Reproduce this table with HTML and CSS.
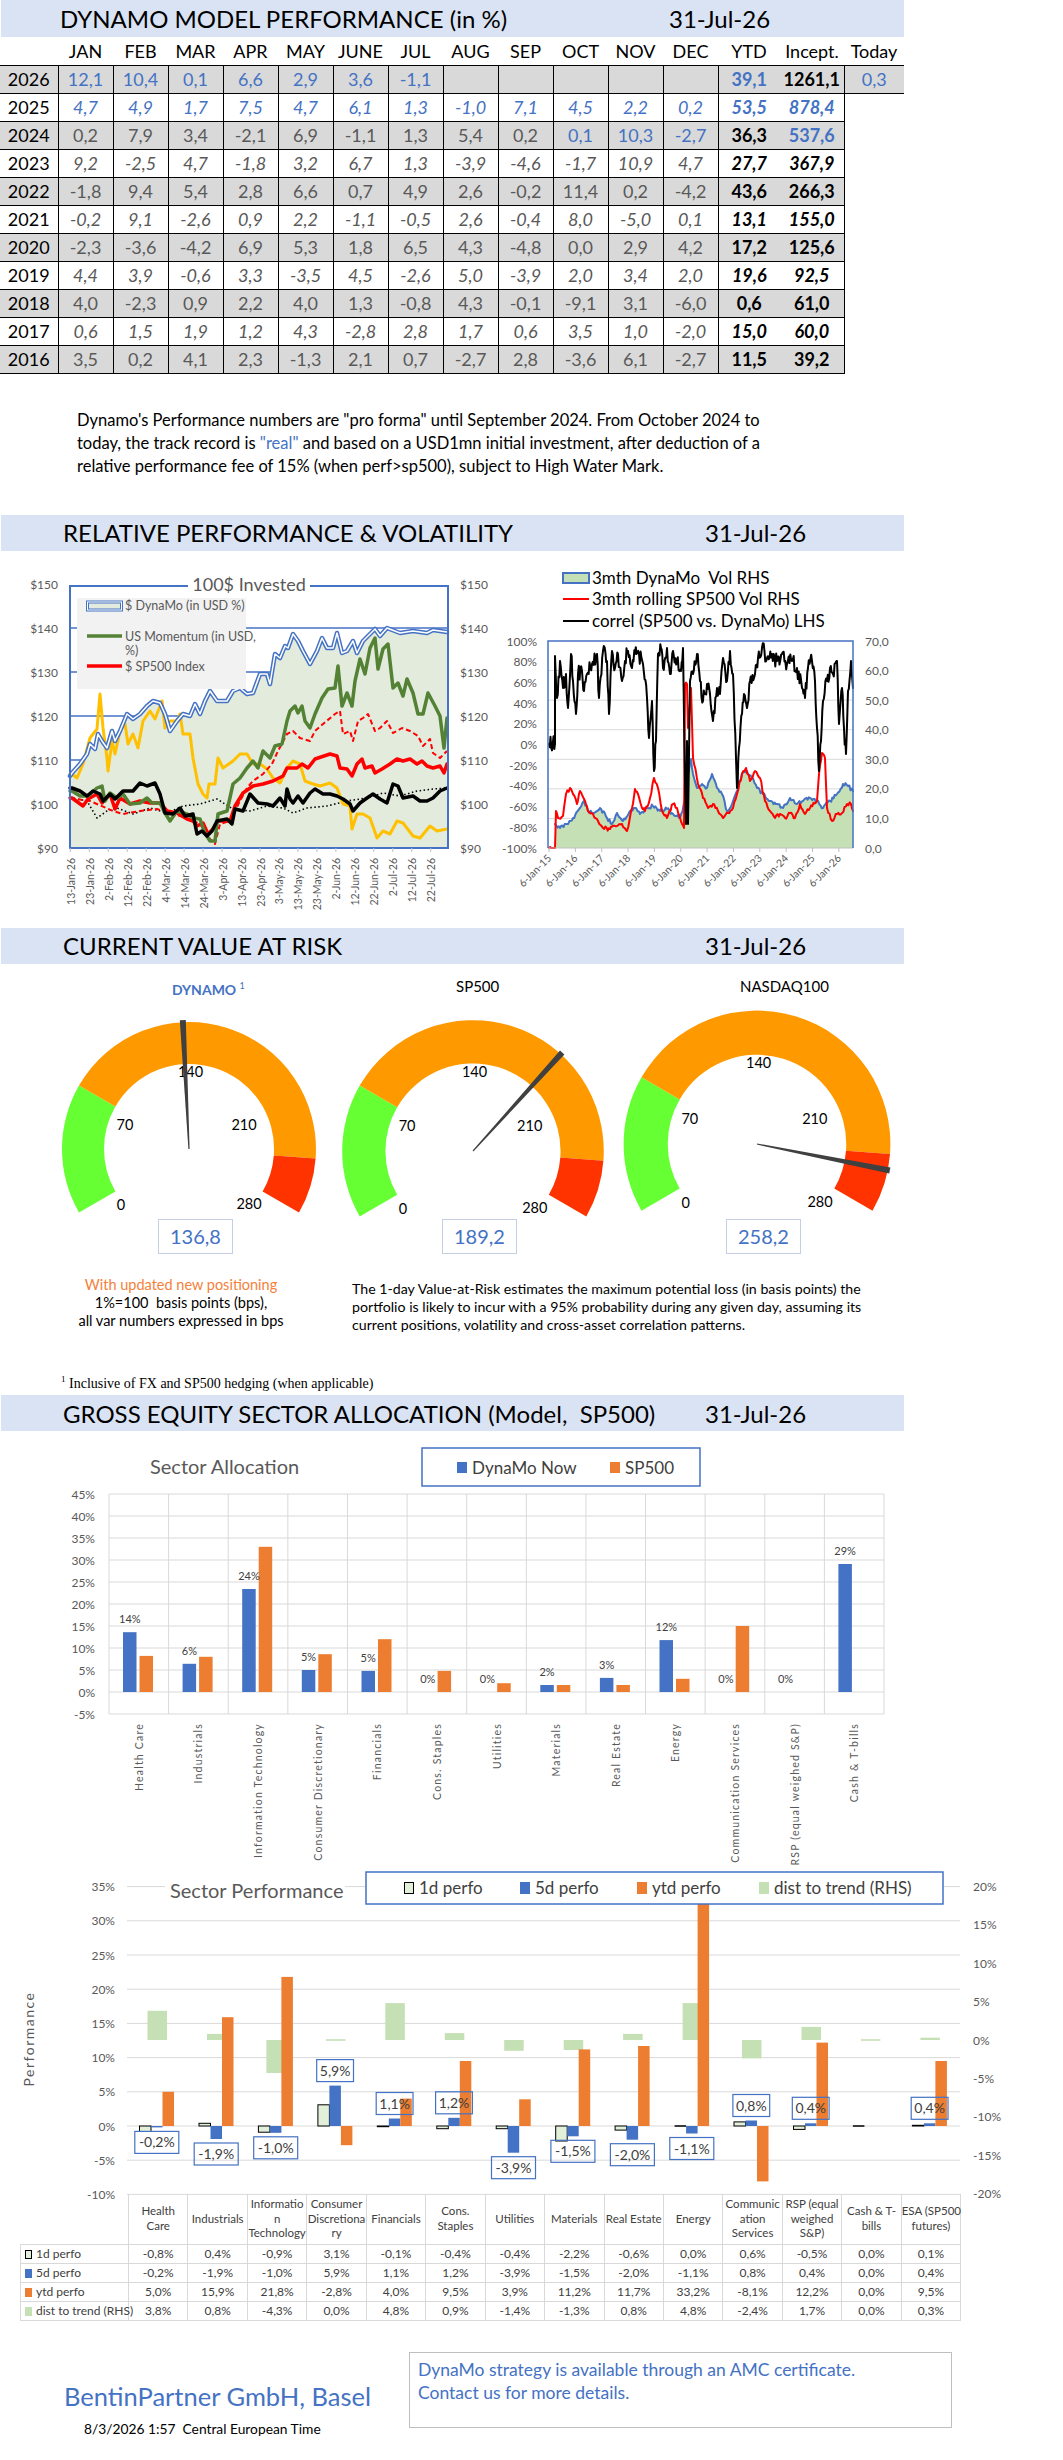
FILE: index.html
```html
<!DOCTYPE html>
<html lang="en">
<head>
<meta charset="utf-8">
<title>DynaMo Model Performance</title>
<link rel="stylesheet" href="styles.css">
</head>
<body>
<div class="page">

  <header class="bar bar-top">
    <h1 class="bar-title">DYNAMO MODEL PERFORMANCE (in %)</h1>
    <span class="bar-date">31-Jul-26</span>
  </header>

  <table class="perf">
    <colgroup>
      <col class="c-year">
      <col span="12" class="c-m">
      <col class="c-ytd"><col class="c-inc"><col class="c-today">
    </colgroup>
    <thead>
      <tr><th></th><th>JAN</th><th>FEB</th><th>MAR</th><th>APR</th><th>MAY</th><th>JUNE</th><th>JUL</th><th>AUG</th><th>SEP</th><th>OCT</th><th>NOV</th><th>DEC</th><th>YTD</th><th>Incept.</th><th>Today</th></tr>
    </thead>
    <tbody>
      <tr class="g"><td class="yr">2026</td><td class="m bl">12,1</td><td class="m bl">10,4</td><td class="m bl">0,1</td><td class="m bl">6,6</td><td class="m bl">2,9</td><td class="m bl">3,6</td><td class="m bl">-1,1</td><td class="m"></td><td class="m"></td><td class="m"></td><td class="m"></td><td class="m"></td><td class="ytd bl">39,1</td><td class="inc">1261,1</td><td class="tv bl">0,3</td></tr>
      <tr class="w it"><td class="yr">2025</td><td class="m bl">4,7</td><td class="m bl">4,9</td><td class="m bl">1,7</td><td class="m bl">7,5</td><td class="m bl">4,7</td><td class="m bl">6,1</td><td class="m bl">1,3</td><td class="m bl">-1,0</td><td class="m bl">7,1</td><td class="m bl">4,5</td><td class="m bl">2,2</td><td class="m bl">0,2</td><td class="ytd bl">53,5</td><td class="inc bl">878,4</td><td class="te"></td></tr>
      <tr class="g"><td class="yr">2024</td><td class="m">0,2</td><td class="m">7,9</td><td class="m">3,4</td><td class="m">-2,1</td><td class="m">6,9</td><td class="m">-1,1</td><td class="m">1,3</td><td class="m">5,4</td><td class="m">0,2</td><td class="m bl">0,1</td><td class="m bl">10,3</td><td class="m bl">-2,7</td><td class="ytd">36,3</td><td class="inc bl">537,6</td><td class="te"></td></tr>
      <tr class="w it"><td class="yr">2023</td><td class="m">9,2</td><td class="m">-2,5</td><td class="m">4,7</td><td class="m">-1,8</td><td class="m">3,2</td><td class="m">6,7</td><td class="m">1,3</td><td class="m">-3,9</td><td class="m">-4,6</td><td class="m">-1,7</td><td class="m">10,9</td><td class="m">4,7</td><td class="ytd">27,7</td><td class="inc">367,9</td><td class="te"></td></tr>
      <tr class="g"><td class="yr">2022</td><td class="m">-1,8</td><td class="m">9,4</td><td class="m">5,4</td><td class="m">2,8</td><td class="m">6,6</td><td class="m">0,7</td><td class="m">4,9</td><td class="m">2,6</td><td class="m">-0,2</td><td class="m">11,4</td><td class="m">0,2</td><td class="m">-4,2</td><td class="ytd">43,6</td><td class="inc">266,3</td><td class="te"></td></tr>
      <tr class="w it"><td class="yr">2021</td><td class="m">-0,2</td><td class="m">9,1</td><td class="m">-2,6</td><td class="m">0,9</td><td class="m">2,2</td><td class="m">-1,1</td><td class="m">-0,5</td><td class="m">2,6</td><td class="m">-0,4</td><td class="m">8,0</td><td class="m">-5,0</td><td class="m">0,1</td><td class="ytd">13,1</td><td class="inc">155,0</td><td class="te"></td></tr>
      <tr class="g"><td class="yr">2020</td><td class="m">-2,3</td><td class="m">-3,6</td><td class="m">-4,2</td><td class="m">6,9</td><td class="m">5,3</td><td class="m">1,8</td><td class="m">6,5</td><td class="m">4,3</td><td class="m">-4,8</td><td class="m">0,0</td><td class="m">2,9</td><td class="m">4,2</td><td class="ytd">17,2</td><td class="inc">125,6</td><td class="te"></td></tr>
      <tr class="w it"><td class="yr">2019</td><td class="m">4,4</td><td class="m">3,9</td><td class="m">-0,6</td><td class="m">3,3</td><td class="m">-3,5</td><td class="m">4,5</td><td class="m">-2,6</td><td class="m">5,0</td><td class="m">-3,9</td><td class="m">2,0</td><td class="m">3,4</td><td class="m">2,0</td><td class="ytd">19,6</td><td class="inc">92,5</td><td class="te"></td></tr>
      <tr class="g"><td class="yr">2018</td><td class="m">4,0</td><td class="m">-2,3</td><td class="m">0,9</td><td class="m">2,2</td><td class="m">4,0</td><td class="m">1,3</td><td class="m">-0,8</td><td class="m">4,3</td><td class="m">-0,1</td><td class="m">-9,1</td><td class="m">3,1</td><td class="m">-6,0</td><td class="ytd">0,6</td><td class="inc">61,0</td><td class="te"></td></tr>
      <tr class="w it"><td class="yr">2017</td><td class="m">0,6</td><td class="m">1,5</td><td class="m">1,9</td><td class="m">1,2</td><td class="m">4,3</td><td class="m">-2,8</td><td class="m">2,8</td><td class="m">1,7</td><td class="m">0,6</td><td class="m">3,5</td><td class="m">1,0</td><td class="m">-2,0</td><td class="ytd">15,0</td><td class="inc">60,0</td><td class="te"></td></tr>
      <tr class="g"><td class="yr">2016</td><td class="m">3,5</td><td class="m">0,2</td><td class="m">4,1</td><td class="m">2,3</td><td class="m">-1,3</td><td class="m">2,1</td><td class="m">0,7</td><td class="m">-2,7</td><td class="m">2,8</td><td class="m">-3,6</td><td class="m">6,1</td><td class="m">-2,7</td><td class="ytd">11,5</td><td class="inc">39,2</td><td class="te"></td></tr>
    </tbody>
  </table>

  <p class="note">Dynamo's Performance numbers are "pro forma" until September 2024. From October 2024 to<br>today, the track record is <span class="real">"real"</span> and based on a USD1mn initial investment, after deduction of a<br>relative performance fee of 15% (when perf&gt;sp500), subject to High Water Mark.</p>

  <div class="bar sec-rel">
    <h2 class="bar-title">RELATIVE PERFORMANCE &amp; VOLATILITY</h2>
    <span class="bar-date">31-Jul-26</span>
  </div>

  <div class="charts">
    <svg id="rel" class="chart" width="496" height="360" viewBox="0 550 496 360"></svg>
    <svg id="vol" class="chart" width="408" height="360" viewBox="496 550 408 360"></svg>
  </div>

  <div class="bar sec-var">
    <h2 class="bar-title">CURRENT VALUE AT RISK</h2>
    <span class="bar-date">31-Jul-26</span>
  </div>

  <div class="gauges">
    <div class="gauge">
      <div class="gauge-title dyn">DYNAMO <sup>1</sup></div>
      <svg id="g1" width="270" height="222" viewBox="0 0 270 222"></svg>
      <div class="vbox">136,8</div>
    </div>
    <div class="gauge">
      <div class="gauge-title">SP500</div>
      <svg id="g2" width="270" height="222" viewBox="0 0 270 222"></svg>
      <div class="vbox">189,2</div>
    </div>
    <div class="gauge">
      <div class="gauge-title">NASDAQ100</div>
      <svg id="g3" width="270" height="222" viewBox="0 0 270 222"></svg>
      <div class="vbox">258,2</div>
    </div>
  </div>

  <div class="var-notes">
    <p class="var-left"><span class="upd">With updated new positioning</span><br>1%=100&nbsp; basis points (bps),<br>all var numbers expressed in bps</p>
    <p class="var-right">The 1-day Value-at-Risk estimates the maximum potential loss (in basis points) the<br>portfolio is likely to incur with a 95% probability during any given day, assuming its<br>current positions, volatility and cross-asset correlation patterns.</p>
  </div>

  <p class="footnote"><sup>1</sup> Inclusive of FX and SP500 hedging (when applicable)</p>

  <div class="bar sec-alloc">
    <h2 class="bar-title">GROSS EQUITY SECTOR ALLOCATION (Model,&nbsp; SP500)</h2>
    <span class="bar-date">31-Jul-26</span>
  </div>

  <svg id="alloc" class="chart chart-ov" width="1063" height="426" viewBox="0 1424 1063 426"></svg>
  <svg id="sperf" class="chart chart-ov" width="1063" height="337" viewBox="0 1850 1063 337"></svg>

  <table class="sect">
    <colgroup><col class="sl"><col span="14" class="sc"></colgroup>
    <thead>
      <tr><th class="corner"></th><th>Health<br>Care</th><th>Industrials</th><th>Informatio<br>n<br>Technology</th><th>Consumer<br>Discretiona<br>ry</th><th>Financials</th><th>Cons.<br>Staples</th><th>Utilities</th><th>Materials</th><th>Real Estate</th><th>Energy</th><th>Communic<br>ation<br>Services</th><th>RSP (equal<br>weighed<br>S&amp;P)</th><th>Cash &amp; T-<br>bills</th><th>ESA (SP500<br>futures)</th></tr>
    </thead>
    <tbody>
      <tr><td class="lab"><span class="sw sw-1d"></span>1d perfo</td><td>-0,8%</td><td>0,4%</td><td>-0,9%</td><td>3,1%</td><td>-0,1%</td><td>-0,4%</td><td>-0,4%</td><td>-2,2%</td><td>-0,6%</td><td>0,0%</td><td>0,6%</td><td>-0,5%</td><td>0,0%</td><td>0,1%</td></tr>
      <tr><td class="lab"><span class="sw sw-5d"></span>5d perfo</td><td>-0,2%</td><td>-1,9%</td><td>-1,0%</td><td>5,9%</td><td>1,1%</td><td>1,2%</td><td>-3,9%</td><td>-1,5%</td><td>-2,0%</td><td>-1,1%</td><td>0,8%</td><td>0,4%</td><td>0,0%</td><td>0,4%</td></tr>
      <tr><td class="lab"><span class="sw sw-ytd"></span>ytd perfo</td><td>5,0%</td><td>15,9%</td><td>21,8%</td><td>-2,8%</td><td>4,0%</td><td>9,5%</td><td>3,9%</td><td>11,2%</td><td>11,7%</td><td>33,2%</td><td>-8,1%</td><td>12,2%</td><td>0,0%</td><td>9,5%</td></tr>
      <tr><td class="lab"><span class="sw sw-dt"></span>dist to trend (RHS)</td><td>3,8%</td><td>0,8%</td><td>-4,3%</td><td>0,0%</td><td>4,8%</td><td>0,9%</td><td>-1,4%</td><td>-1,3%</td><td>0,8%</td><td>4,8%</td><td>-2,4%</td><td>1,7%</td><td>0,0%</td><td>0,3%</td></tr>
    </tbody>
  </table>

  <footer class="footer">
    <div class="brand">
      <div class="brand-name">BentinPartner GmbH, Basel</div>
      <div class="brand-time">8/3/2026 1:57&nbsp; Central European Time</div>
    </div>
    <div class="amc">DynaMo strategy is available through an AMC certificate.<br>Contact us for more details.</div>
  </footer>

</div>
<script src="script.js"></script>
</body>
</html>
```

FILE: styles.css
```css
* { box-sizing: border-box; }
html, body { margin: 0; padding: 0; background: #fff; }
body {
  font-family: Lato, "Liberation Sans", "DejaVu Sans", sans-serif;
  color: #000;
}
.page { width: 1063px; }

/* ---------- section bars ---------- */
.bar {
  display: flex;
  align-items: center;
  width: 903px;
  height: 36px;
  margin-left: 1px;
  background: #dae3f3;
}
.bar-title {
  margin: 0 0 0 62px;
  width: 642px;
  font-size: 24px;
  font-weight: normal;
  white-space: nowrap;
}
.bar-date { font-size: 24px; white-space: nowrap; }
.bar-top { height: 37px; }
.bar-top .bar-title { margin-left: 59px; width: 609px; }

.sec-rel { margin-top: 37px; }
.sec-var { margin-top: 17px; }
.sec-alloc { margin-top: 3px; }

/* ---------- performance table ---------- */
.perf {
  border-collapse: collapse;
  table-layout: fixed;
  width: 904px;
}
.perf .c-year { width: 58px; }
.perf .c-m { width: 55px; }
.perf .c-ytd { width: 62px; }
.perf .c-inc { width: 64px; }
.perf .c-today { width: 60px; }
.perf tr { height: 28px; }
.perf th {
  padding: 0;
  font-size: 18px;
  font-weight: normal;
  text-align: center;
  border-bottom: 1.5px solid #000;
  white-space: nowrap;
}
.perf td {
  padding: 0;
  font-size: 18px;
  text-align: center;
  white-space: nowrap;
  border-bottom: 1px solid #000;
}
.perf td.yr { color: #000; font-style: normal; }
.perf td.m { color: #595959; border-left: 1px solid #000; }
.perf td.ytd { border-left: 1px solid #000; }
.perf td.inc { border-right: 1px solid #000; }
.perf td.ytd, .perf td.inc { font-weight: bold; color: #000; }
.perf tr.g td { background: #d9d9d9; }
.perf tr.it td.m, .perf tr.it td.ytd, .perf tr.it td.inc { font-style: italic; }
.perf tr td.te { background: #fff; border-bottom: 0; }
.perf td.bl { color: #4472c4; }

/* ---------- note ---------- */
.note {
  margin: 35px 0 0 77px;
  font-size: 16.5px;
  line-height: 23px;
  white-space: nowrap;
}
.note .real { color: #4472c4; }

/* ---------- charts ---------- */
.charts { display: flex; height: 360px; }
.chart { display: block; }
.chart-ov { overflow: visible; }

.ax { font-family: Lato, sans-serif; font-size: 12px; fill: #595959; }
.axs { font-family: Lato, sans-serif; font-size: 10.5px; fill: #595959; }
.ct { font-family: Lato, sans-serif; font-size: 18px; fill: #595959; }
.ct2 { font-family: Lato, sans-serif; font-size: 20px; fill: #595959; }
.lg { font-family: Lato, sans-serif; font-size: 12.5px; fill: #595959; }
.lgv { font-family: Lato, sans-serif; font-size: 17px; fill: #000; }
.lgb { font-family: Lato, sans-serif; font-size: 17px; fill: #404040; }
.dl { font-family: Lato, sans-serif; font-size: 11px; fill: #404040; }
.dlb { font-family: Lato, sans-serif; font-size: 14px; fill: #404040; }
.cat { font-family: Lato, sans-serif; font-size: 10.5px; fill: #595959; letter-spacing: 1.2px; }
.ylab { font-family: Lato, sans-serif; font-size: 14px; fill: #595959; letter-spacing: 1.5px; }
.gl { font-family: Lato, sans-serif; font-size: 14.5px; fill: #000; }

/* ---------- gauges ---------- */
.gauges { display: flex; gap: 14px; margin-left: 54px; }
.gauge { width: 270px; display: flex; flex-direction: column; }
.gauge svg { display: block; }
.gauge-title {
  margin-top: 12px;
  height: 20px;
  line-height: 20px;
  padding-left: 118px;
  font-size: 15px;
  white-space: nowrap;
}
.gauge-title.dyn { color: #4472c4; font-weight: bold; font-size: 14px; }
.gauge-title sup { font-size: 9px; font-weight: normal; }
.vbox {
  margin: 1px 0 0 104px;
  width: 75px;
  height: 35px;
  border: 1.5px solid #c4cfe4;
  display: flex;
  align-items: center;
  justify-content: center;
  color: #4472c4;
  font-size: 20px;
}

.var-notes { display: flex; margin-top: 22px; line-height: 18px; }
.var-notes p { white-space: nowrap; }
.var-notes .var-left { width: 300px; margin: 0 0 0 31px; text-align: center; font-size: 14.5px; }
.var-left .upd { color: #f4813a; }
.var-notes .var-right { margin: 0 0 0 21px; padding-top: 4px; font-size: 14.2px; }

.footnote {
  margin: 36px 0 0 61px;
  font-family: "Liberation Serif", "DejaVu Serif", serif;
  font-size: 14px;
  line-height: 18px;
}
.footnote sup { font-size: 9px; }

/* ---------- sector table ---------- */
.sect {
  border-collapse: collapse;
  table-layout: fixed;
  width: 940.3px;
  margin-left: 20px;
  color: #404040;
  font-size: 12px;
}
.sect .sl { width: 108px; }
.sect .sc { width: 59.45px; }
.sect th {
  height: 50px;
  padding: 0;
  font-weight: normal;
  font-size: 11.5px;
  line-height: 14.5px;
  white-space: nowrap;
  text-align: center;
  vertical-align: middle;
  border-left: 1px solid #d9d9d9;
  border-right: 1px solid #d9d9d9;
  border-bottom: 1px solid #d9d9d9;
}
.sect th.corner { border-left: 0; }
.sect td {
  height: 19px;
  padding: 0;
  text-align: center;
  white-space: nowrap;
  border: 1px solid #d9d9d9;
}
.sect td.lab { text-align: left; padding-left: 4px; }
.sw { display: inline-block; width: 7px; height: 9px; margin-right: 4px; vertical-align: -1px; }
.sw-1d { background: #e2f0d9; border: 1px solid #000; }
.sw-5d { background: #4472c4; }
.sw-ytd { background: #ed7d31; }
.sw-dt { background: #c5e0b4; }

/* ---------- footer ---------- */
.footer { display: flex; margin-top: 31px; }
.brand { width: 409px; }
.brand-name {
  margin: 29px 0 0 64px;
  font-size: 25.5px;
  line-height: 30px;
  color: #4472c4;
  white-space: nowrap;
}
.brand-time {
  margin: 9px 0 0 84px;
  font-size: 13.8px;
  line-height: 18px;
  white-space: nowrap;
}
.amc {
  width: 543px;
  height: 76px;
  border: 1.5px solid #bfbfbf;
  padding: 5px 0 0 8px;
  color: #4472c4;
  font-size: 17.5px;
  line-height: 23px;
  white-space: nowrap;
}
```

FILE: script.js
```js
(function () {
  'use strict';
  var NS = 'http://www.w3.org/2000/svg';

  function el(p, tag, a, txt) {
    var e = document.createElementNS(NS, tag);
    for (var k in a) { if (Object.prototype.hasOwnProperty.call(a, k)) e.setAttribute(k, a[k]); }
    if (txt !== undefined) e.textContent = txt;
    p.appendChild(e);
    return e;
  }
  function fx(n) { return Math.round(n * 10) / 10; }

  var seed = 11;
  function rnd() { seed = (seed * 9301 + 49297) % 233280; return seed / 233280; }
  function parse(s) {
    var n = s.trim().split(/[\s,]+/).map(Number), o = [];
    for (var i = 0; i + 1 < n.length; i += 2) o.push([n[i], n[i + 1]]);
    return o;
  }
  function ptsStr(a) { return a.map(function (p) { return fx(p[0]) + ',' + fx(p[1]); }).join(' '); }
  function densify(a, step, amp, lo, hi) {
    var out = [];
    for (var i = 0; i < a.length - 1; i++) {
      var p = a[i], q = a[i + 1];
      var n = Math.max(1, Math.round((q[0] - p[0]) / step));
      for (var j = 0; j < n; j++) {
        var t = j / n, y = p[1] + (q[1] - p[1]) * t;
        if (j) y += (rnd() - 0.5) * amp;
        out.push([p[0] + (q[0] - p[0]) * t, Math.min(hi, Math.max(lo, y))]);
      }
    }
    out.push(a[a.length - 1]);
    return out;
  }
  function line(svg, pts, attrs) {
    var a = { points: ptsStr(pts), fill: 'none', 'stroke-linejoin': 'round', 'stroke-linecap': 'round' };
    for (var k in attrs) a[k] = attrs[k];
    return el(svg, 'polyline', a);
  }

  /* ================= 100$ invested chart ================= */
  var DYN = '70,775 72,772 80,763 87,753 90,743 95,748 98,733 102,740 107,747 112,730 115,740 120,730 127,713 133,718 140,713 147,705 153,700 160,702 165,713 170,730 177,720 183,713 190,715 195,703 200,713 205,700 210,690 217,700 227,700 233,690 240,687 247,693 253,692 260,673 267,673 270,683 275,653 280,657 285,645 288,647 293,633 298,640 303,650 310,663 317,650 322,637 327,647 333,647 337,632 342,652 347,650 353,640 357,652 363,640 370,633 375,628 380,635 387,627 400,632 413,630 427,632 433,629 447,631';
  var GRN = '70,790 72,790 80,795 88,795 97,787 102,785 105,800 110,792 117,797 123,793 130,803 140,802 147,797 152,802 160,802 165,812 170,820 177,810 187,813 193,817 200,818 205,832 210,840 215,840 218,813 227,810 233,783 240,777 247,767 253,760 258,767 263,750 270,757 275,745 282,743 287,720 290,710 295,705 298,712 302,705 305,720 310,727 315,713 322,697 328,688 335,687 338,665 342,705 347,692 352,705 355,680 360,658 365,673 370,647 375,637 378,668 383,648 388,643 393,687 398,682 403,695 407,678 413,692 418,713 423,713 428,692 435,705 440,715 444,747 447,717';
  var RED = '70,797 72,797 83,805 88,798 97,793 102,802 110,793 115,808 120,797 130,803 140,800 150,802 160,802 167,810 177,812 187,818 193,820 197,825 203,822 208,833 213,828 218,820 230,820 235,805 243,792 253,785 263,783 273,780 283,775 287,767 297,767 302,763 308,767 315,758 330,753 337,755 340,767 347,768 352,775 357,763 362,758 365,767 372,765 375,772 382,768 390,763 397,758 403,760 410,758 417,763 422,760 427,765 433,767 440,765 444,772 447,763';
  var RDS = '70,797 90,800 113,810 123,813 140,810 157,808 173,813 187,817 200,823 210,838 215,843 220,823 230,820 240,800 247,787 253,780 263,773 272,763 278,750 287,733 293,730 300,737 310,740 315,730 323,723 335,713 340,710 343,733 350,730 353,740 358,720 363,717 368,713 375,730 380,727 387,720 393,732 402,727 410,730 418,735 423,745 430,738 433,752 440,757 447,750';
  var YEL = '70,773 72,773 77,777 83,763 90,737 97,728 100,693 103,727 107,757 108,770 112,740 115,753 120,730 125,723 128,743 133,733 138,747 143,720 150,710 155,718 162,700 165,727 170,720 177,720 180,713 183,733 190,733 193,757 198,783 203,793 207,797 209,783 215,783 218,757 223,767 233,760 240,753 247,753 253,763 260,763 267,768 273,777 280,782 287,767 293,760 300,763 305,780 313,783 320,785 330,782 337,787 343,803 350,805 352,828 357,813 363,813 370,817 377,837 383,830 390,833 397,820 403,822 413,835 420,837 430,825 437,830 447,828';
  var BLK = '70,787 72,787 80,790 87,795 93,790 100,793 103,800 110,793 115,798 123,790 133,790 140,782 147,785 155,782 160,793 165,812 173,813 180,807 185,815 193,813 197,833 202,830 207,835 212,830 217,820 227,818 232,823 235,808 243,810 250,793 258,802 267,803 273,805 280,797 285,805 287,788 290,798 293,802 298,795 303,802 310,792 315,788 323,793 330,793 337,795 343,798 350,803 353,810 360,802 367,797 373,793 380,798 387,802 393,783 398,785 403,797 413,795 420,800 427,800 433,797 440,790 447,787';
  var DOT = '70,797 72,797 87,800 97,817 107,810 117,807 133,813 150,807 167,812 183,805 200,803 217,798 233,808 250,810 267,805 283,807 293,812 307,807 327,805 347,800 367,797 383,792 400,795 417,790 433,788 447,787';

  var rel = document.getElementById('rel');
  if (rel) {
    [150, 140, 130, 120, 110, 100, 90].forEach(function (v) {
      var y = 847 - (v - 90) * 4.4;
      el(rel, 'text', { x: 58, y: y + 4.5, 'text-anchor': 'end', 'class': 'ax' }, '$' + v);
      el(rel, 'text', { x: 460, y: y + 4.5, 'class': 'ax' }, '$' + v);
      if (v < 150 && v > 90) el(rel, 'line', { x1: 70, x2: 448, y1: y, y2: y, stroke: '#4472c4', 'stroke-width': 1.5 });
    });
    var dyn = parse(DYN);
    el(rel, 'polygon', { points: ptsStr(dyn.concat([[447, 847], [70, 847]])), fill: '#e3ebdd' });
    line(rel, parse(DOT), { stroke: '#000', 'stroke-width': 1.6, 'stroke-dasharray': '1.5 2.5', 'stroke-linecap': 'butt' });
    line(rel, parse(YEL), { stroke: '#ffc000', 'stroke-width': 3 });
    line(rel, parse(RDS), { stroke: '#ff0000', 'stroke-width': 2, 'stroke-dasharray': '5 3', 'stroke-linecap': 'butt' });
    line(rel, parse(RED), { stroke: '#ff0000', 'stroke-width': 3.5 });
    line(rel, parse(GRN), { stroke: '#548235', 'stroke-width': 3.5 });
    line(rel, parse(BLK), { stroke: '#000', 'stroke-width': 3.5 });
    line(rel, dyn, { stroke: '#4472c4', 'stroke-width': 4.5 });
    line(rel, dyn, { stroke: '#fff', 'stroke-width': 1.5 });
    el(rel, 'rect', { x: 70, y: 585, width: 378, height: 262, fill: 'none', stroke: '#4472c4', 'stroke-width': 2 });
    el(rel, 'rect', { x: 188, y: 574, width: 122, height: 20, fill: '#fff' });
    el(rel, 'text', { x: 249, y: 590, 'text-anchor': 'middle', 'class': 'ct' }, '100$ Invested');
    var dates = ['13-Jan-26', '23-Jan-26', '2-Feb-26', '12-Feb-26', '22-Feb-26', '4-Mar-26', '14-Mar-26', '24-Mar-26', '3-Apr-26', '13-Apr-26', '23-Apr-26', '3-May-26', '13-May-26', '23-May-26', '2-Jun-26', '12-Jun-26', '22-Jun-26', '2-Jul-26', '12-Jul-26', '22-Jul-26'];
    dates.forEach(function (d, i) {
      var x = 70.3 + i * 18.97;
      el(rel, 'line', { x1: x, x2: x, y1: 847, y2: 851, stroke: '#bfbfbf', 'stroke-width': 1 });
      var tx = x + 4.5;
      el(rel, 'text', { x: tx, y: 857, 'text-anchor': 'end', 'class': 'axs', transform: 'rotate(-90 ' + tx + ' 857)' }, d);
    });
    // legend
    el(rel, 'rect', { x: 77, y: 597, width: 169, height: 91, fill: '#f2f2f2' });
    el(rel, 'rect', { x: 87.5, y: 601, width: 34, height: 8, fill: '#e3ebdd', stroke: '#4472c4', 'stroke-width': 3 });
    el(rel, 'rect', { x: 87.5, y: 601, width: 34, height: 8, fill: 'none', stroke: '#fff', 'stroke-width': 1 });
    el(rel, 'text', { x: 125, y: 609, 'class': 'lg' }, '$ DynaMo (in USD %)');
    el(rel, 'line', { x1: 87, x2: 122, y1: 635, y2: 635, stroke: '#548235', 'stroke-width': 3.5 });
    el(rel, 'text', { x: 125, y: 640, 'class': 'lg' }, 'US Momentum (in USD,');
    el(rel, 'text', { x: 125, y: 654, 'class': 'lg' }, '%)');
    el(rel, 'line', { x1: 87, x2: 122, y1: 665, y2: 665, stroke: '#ff0000', 'stroke-width': 3.5 });
    el(rel, 'text', { x: 125, y: 670, 'class': 'lg' }, '$ SP500 Index');
  }

  /* ================= volatility / correlation chart ================= */
  var CORR = '549,743 555,743 555,655 557,697 560,660 563,687 566,673 568,707 571,653 573,680 576,713 578,673 582,670 584,690 587,673 592,663 597,653 599,697 603,650 607,660 609,713 612,650 615,667 618,653 622,680 625,660 628,650 632,667 635,653 639,653 643,663 647,697 649,737 652,700 654,770 656,740 658,653 661,647 663,667 667,647 670,673 673,650 677,660 681,670 683,647 685,780 686,823 687,740 688,823 690,680 693,673 697,653 700,680 703,700 707,683 710,693 713,720 717,687 720,693 723,657 727,680 730,650 733,673 736,757 737,787 739,747 742,713 744,693 747,707 750,680 755,673 758,657 762,647 767,657 772,653 777,660 782,653 787,663 792,660 797,667 802,687 805,697 808,667 812,660 815,680 817,727 819,770 821,740 823,700 827,680 830,667 833,673 837,660 839,723 842,687 844,727 846,753 848,690 851,660 853,687';
  var SPV = '549,847 555,847 556,810 558,817 563,815 566,793 570,787 573,793 577,803 580,790 585,800 588,810 593,813 598,820 603,827 610,828 617,825 622,823 627,830 632,807 635,788 638,793 642,807 645,810 650,797 654,777 658,787 662,810 667,817 673,803 677,807 682,823 684,827 685,683 687,683 688,727 691,687 693,757 698,783 703,797 708,807 713,803 718,810 723,817 728,812 733,807 737,793 742,773 746,767 750,780 755,770 760,777 765,800 770,810 775,817 780,813 785,817 790,812 795,817 800,803 805,813 810,807 817,800 819,773 822,752 825,757 827,807 832,820 837,813 842,812 847,803 851,803 853,810';
  var DYV = '555,823 560,827 567,823 573,817 580,807 584,800 588,810 593,813 600,807 607,817 612,823 617,812 623,820 630,810 635,807 640,813 647,807 653,805 660,810 667,808 673,813 680,817 685,800 688,773 691,758 693,773 697,787 702,783 707,787 712,773 717,787 722,793 727,810 732,803 737,790 742,773 747,770 752,777 757,787 763,793 770,800 777,803 783,807 790,797 797,803 803,800 810,797 817,800 823,807 830,800 837,793 843,783 848,785 853,790';

  var vol = document.getElementById('vol');
  if (vol) {
    var rv = function (v) { return 847 - v * 2.957; };
    for (var g = 10; g <= 60; g += 10) el(vol, 'line', { x1: 548, x2: 853, y1: rv(g), y2: rv(g), stroke: '#d9d9d9', 'stroke-width': 1 });
    for (var i = 0; i <= 10; i++) {
      var pv = 100 - i * 20;
      el(vol, 'text', { x: 537, y: 640 + i * 20.7 + 4.5, 'text-anchor': 'end', 'class': 'ax' }, pv + '%');
    }
    for (var v = 70; v >= 0; v -= 10) el(vol, 'text', { x: 865, y: rv(v) + 4.5, 'class': 'ax' }, v + ',0');
    var dv = densify(parse(DYV), 1.2, 4, 640, 847);
    el(vol, 'polygon', { points: ptsStr(dv.concat([[853, 847], [555, 847]])), fill: '#c5e0b4' });
    line(vol, dv, { stroke: '#4472c4', 'stroke-width': 2 });
    line(vol, densify(parse(SPV), 1.2, 4, 640, 847), { stroke: '#ff0000', 'stroke-width': 2 });
    line(vol, densify(parse(CORR), 0.8, 16, 641, 846), { stroke: '#000', 'stroke-width': 2 });
    el(vol, 'line', { x1: 548, x2: 853, y1: 847, y2: 847, stroke: '#bfbfbf', 'stroke-width': 1 });
    el(vol, 'polyline', { points: '548,847 548,640 853,640 853,847', fill: 'none', stroke: '#4472c4', 'stroke-width': 1.5 });
    for (var k = 0; k < 12; k++) {
      var tx = 549 + k * 26.35;
      el(vol, 'line', { x1: tx, x2: tx, y1: 847, y2: 851, stroke: '#bfbfbf', 'stroke-width': 1 });
      var ax = tx + 3, ay = 858;
      el(vol, 'text', { x: ax, y: ay, 'text-anchor': 'end', 'class': 'axs', transform: 'rotate(-45 ' + ax + ' ' + ay + ')' }, '6-Jan-' + (15 + k));
    }
    el(vol, 'rect', { x: 563, y: 572, width: 26, height: 10, fill: '#c5e0b4', stroke: '#4472c4', 'stroke-width': 2 });
    el(vol, 'text', { x: 592, y: 583, 'class': 'lgv' }, '3mth DynaMo\u00a0 Vol RHS');
    el(vol, 'line', { x1: 563, x2: 589, y1: 598, y2: 598, stroke: '#ff0000', 'stroke-width': 2 });
    el(vol, 'text', { x: 592, y: 604, 'class': 'lgv' }, '3mth rolling SP500 Vol RHS');
    el(vol, 'line', { x1: 563, x2: 589, y1: 620, y2: 620, stroke: '#000', 'stroke-width': 2 });
    el(vol, 'text', { x: 592, y: 626, 'class': 'lgv' }, 'correl (SP500 vs. DynaMo) LHS');
  }

  /* ================= gauges ================= */
  function gauge(id, value, s, cy) {
    var svg = document.getElementById(id);
    if (!svg) return;
    var cx = 135, R = 127 * s, r = 85 * s;
    function P(rad, deg) { var a = deg * Math.PI / 180; return fx(cx + rad * Math.sin(a)) + ' ' + fx(cy - rad * Math.cos(a)); }
    function ang(v) { return (v - 140) * 240 / 280; }
    function seg(v0, v1, col) {
      var a0 = ang(v0), a1 = ang(v1), large = (a1 - a0) > 180 ? 1 : 0;
      var d = 'M' + P(R, a0) + ' A' + R + ' ' + R + ' 0 ' + large + ' 1 ' + P(R, a1) +
        ' L' + P(r, a1) + ' A' + r + ' ' + r + ' 0 ' + large + ' 0 ' + P(r, a0) + ' Z';
      el(svg, 'path', { d: d, fill: col });
    }
    seg(0, 70, '#66ff33');
    seg(70, 250, '#ff9900');
    seg(250, 280, '#ff3300');
    [[0, -68, 56], [70, -64, -24], [140, 1.5, -77], [210, 55, -24], [280, 60, 55]].forEach(function (l) {
      el(svg, 'text', { x: fx(cx + l[1] * s), y: fx(cy + l[2] * s + 5), 'text-anchor': 'middle', 'class': 'gl' }, String(l[0]));
    });
    var a = ang(value) * Math.PI / 180, L = 129 * s;
    var dx = Math.sin(a), dy = -Math.cos(a), px = Math.cos(a), py = Math.sin(a);
    var w0 = 0.6, w1 = 3;
    var p = [[cx + px * w0, cy + py * w0], [cx + dx * L + px * w1, cy + dy * L + py * w1],
      [cx + dx * L - px * w1, cy + dy * L - py * w1], [cx - px * w0, cy - py * w0]];
    el(svg, 'polygon', { points: ptsStr(p), fill: '#404040' });
  }
  gauge('g1', 136.8, 1, 153);
  gauge('g2', 189.2, 1.03, 155);
  gauge('g3', 258.2, 1.05, 148);

  /* ================= sector allocation ================= */
  var alloc = document.getElementById('alloc');
  if (alloc) {
    var AX0 = 109, AX1 = 884, acw = (AX1 - AX0) / 13;
    var ay = function (p) { return 1685 - p * 4.4; };
    el(alloc, 'text', { x: 150, y: 1467, 'class': 'ct2' }, 'Sector Allocation');
    el(alloc, 'rect', { x: 422, y: 1441, width: 278, height: 38, fill: '#fff', stroke: '#4472c4', 'stroke-width': 1.5 });
    el(alloc, 'rect', { x: 457, y: 1455, width: 10, height: 11, fill: '#4472c4' });
    el(alloc, 'text', { x: 472, y: 1467, 'class': 'lgb' }, 'DynaMo Now');
    el(alloc, 'rect', { x: 610, y: 1455, width: 10, height: 11, fill: '#ed7d31' });
    el(alloc, 'text', { x: 625, y: 1467, 'class': 'lgb' }, 'SP500');
    for (var pp = 45; pp >= -5; pp -= 5) {
      el(alloc, 'line', { x1: AX0, x2: AX1, y1: ay(pp), y2: ay(pp), stroke: '#d9d9d9', 'stroke-width': 1 });
      el(alloc, 'text', { x: 95, y: ay(pp) + 4.5, 'text-anchor': 'end', 'class': 'ax' }, pp + '%');
    }
    for (var c = 0; c <= 13; c++) {
      var gx = AX0 + c * acw;
      el(alloc, 'line', { x1: gx, x2: gx, y1: ay(45), y2: ay(-5), stroke: '#d9d9d9', 'stroke-width': 1 });
    }
    var cats = ['Health Care', 'Industrials', 'Information Technology', 'Consumer Discretionary', 'Financials', 'Cons. Staples', 'Utilities', 'Materials', 'Real Estate', 'Energy', 'Communication Services', 'RSP (equal weighed S&P)', 'Cash & T-bills'];
    var dynA = [13.6, 6.4, 23.4, 5.0, 4.8, 0, 0, 1.6, 3.2, 11.8, 0, 0, 29.1];
    var spA = [8.2, 8.0, 33.0, 8.6, 12.0, 4.8, 2.0, 1.6, 1.6, 3.0, 15.0, 0, 0];
    var labA = ['14%', '6%', '24%', '5%', '5%', '0%', '0%', '2%', '3%', '12%', '0%', '0%', '29%'];
    cats.forEach(function (name, i) {
      var x0 = AX0 + i * acw;
      if (dynA[i] > 0) el(alloc, 'rect', { x: fx(x0 + 14), y: fx(ay(dynA[i])), width: 13.5, height: fx(dynA[i] * 4.4), fill: '#4472c4' });
      if (spA[i] > 0) el(alloc, 'rect', { x: fx(x0 + 30.5), y: fx(ay(spA[i])), width: 13.5, height: fx(spA[i] * 4.4), fill: '#ed7d31' });
      el(alloc, 'text', { x: fx(x0 + 20.75), y: fx(ay(dynA[i]) - 9), 'text-anchor': 'middle', 'class': 'dl' }, labA[i]);
      var lx = fx(x0 + acw / 2 + 4);
      el(alloc, 'text', { x: lx, y: 1716, 'text-anchor': 'end', 'class': 'cat', transform: 'rotate(-90 ' + lx + ' 1716)' }, name);
    });
  }

  /* ================= sector performance ================= */
  var sp = document.getElementById('sperf');
  if (sp) {
    var PX0 = 127, pcw = 59.45;
    var ly = function (p) { return 2119 - p * 6.84; };
    var ry = function (p) { return 2033 - p * 7.68; };
    for (var q = 35; q >= -10; q -= 5) {
      el(sp, 'line', { x1: PX0, x2: 960, y1: fx(ly(q)), y2: fx(ly(q)), stroke: '#d9d9d9', 'stroke-width': 1 });
      el(sp, 'text', { x: 115, y: fx(ly(q) + 4.5), 'text-anchor': 'end', 'class': 'ax' }, q + '%');
    }
    for (var rr = 20; rr >= -20; rr -= 5) el(sp, 'text', { x: 973, y: fx(ry(rr) + 4.5), 'class': 'ax' }, rr + '%');
    el(sp, 'text', { x: 0, y: 0, 'text-anchor': 'middle', 'class': 'ylab', transform: 'translate(34 2032) rotate(-90)' }, 'Performance');
    var d1 = [-0.8, 0.4, -0.9, 3.1, -0.1, -0.4, -0.4, -2.2, -0.6, 0.0, 0.6, -0.5, 0.0, 0.1];
    var d5 = [-0.2, -1.9, -1.0, 5.9, 1.1, 1.2, -3.9, -1.5, -2.0, -1.1, 0.8, 0.4, 0.0, 0.4];
    var dy = [5.0, 15.9, 21.8, -2.8, 4.0, 9.5, 3.9, 11.2, 11.7, 33.2, -8.1, 12.2, 0.0, 9.5];
    var dt = [3.8, 0.8, -4.3, 0.0, 4.8, 0.9, -1.4, -1.3, 0.8, 4.8, -2.4, 1.7, 0.0, 0.3];
    var bar = function (x, w, y0, y1, attrs) {
      var top = Math.min(y0, y1), h = Math.abs(y1 - y0);
      var a = { x: fx(x), y: fx(top), width: w, height: fx(Math.max(h, 0.01)) };
      for (var k in attrs) a[k] = attrs[k];
      return el(sp, 'rect', a);
    };
    d1.forEach(function (_, i) {
      var x0 = PX0 + i * pcw;
      if (dt[i] !== 0) bar(x0 + 20.5, 19.5, ry(0), ry(dt[i]), { fill: '#c5e0b4' });
      else bar(x0 + 20.5, 19.5, ry(0) - 0.8, ry(0) + 0.8, { fill: '#c5e0b4' });
    });
    d1.forEach(function (_, i) {
      var x0 = PX0 + i * pcw;
      if (d1[i] !== 0) bar(x0 + 12.5, 11.5, ly(0), ly(d1[i]), { fill: '#e2f0d9', stroke: '#000', 'stroke-width': 1 });
      else el(sp, 'line', { x1: fx(x0 + 12.5), x2: fx(x0 + 24), y1: ly(0), y2: ly(0), stroke: '#000', 'stroke-width': 1.5 });
      if (d5[i] !== 0) bar(x0 + 24, 11.5, ly(0), ly(d5[i]), { fill: '#4472c4' });
      if (dy[i] !== 0) bar(x0 + 35.5, 11.5, ly(0), ly(dy[i]), { fill: '#ed7d31' });
    });
    d5.forEach(function (v, i) {
      if (v === 0) return;
      var x0 = PX0 + i * pcw, cx = x0 + 29.75;
      var txt = v.toFixed(1).replace('.', ',') + '%';
      var w = txt.length * 7.2 + 8, h = 22;
      var top = v > 0 ? ly(v) - 4 - h : ly(v) + 4;
      el(sp, 'rect', { x: fx(cx - w / 2), y: fx(top), width: fx(w), height: h, fill: 'none', stroke: '#4472c4', 'stroke-width': 1.2 });
      el(sp, 'text', { x: fx(cx), y: fx(top + 16), 'text-anchor': 'middle', 'class': 'dlb' }, txt);
    });
    el(sp, 'rect', { x: 165, y: 1869, width: 180, height: 26, fill: '#fff' });
    el(sp, 'text', { x: 170, y: 1891, 'class': 'ct2' }, 'Sector Performance');
    el(sp, 'rect', { x: 366, y: 1865, width: 577, height: 32, fill: '#fff', stroke: '#4472c4', 'stroke-width': 1.5 });
    el(sp, 'rect', { x: 404.5, y: 1875.5, width: 9, height: 11, fill: '#e2f0d9', stroke: '#000', 'stroke-width': 1 });
    el(sp, 'text', { x: 419, y: 1887, 'class': 'lgb' }, '1d perfo');
    el(sp, 'rect', { x: 520, y: 1875, width: 10, height: 12, fill: '#4472c4' });
    el(sp, 'text', { x: 535, y: 1887, 'class': 'lgb' }, '5d perfo');
    el(sp, 'rect', { x: 637, y: 1875, width: 10, height: 12, fill: '#ed7d31' });
    el(sp, 'text', { x: 652, y: 1887, 'class': 'lgb' }, 'ytd perfo');
    el(sp, 'rect', { x: 759, y: 1875, width: 10, height: 12, fill: '#c5e0b4' });
    el(sp, 'text', { x: 774, y: 1887, 'class': 'lgb' }, 'dist to trend (RHS)');
  }
})();
```
